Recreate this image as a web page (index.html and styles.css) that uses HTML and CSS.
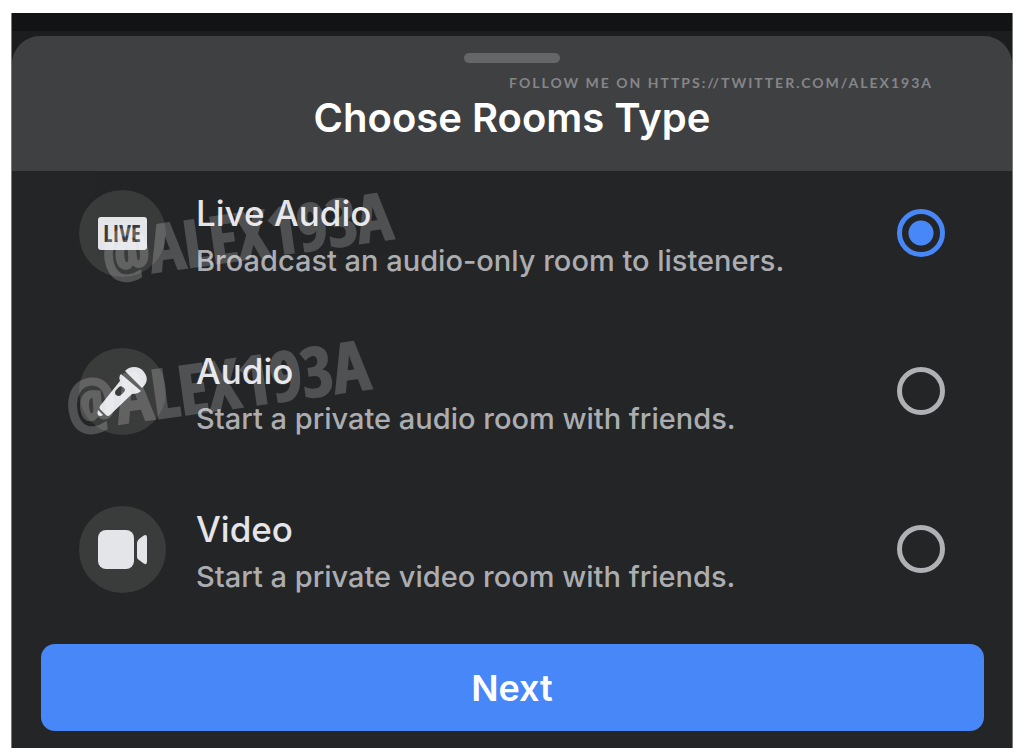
FILE: index.html
```html
<!doctype html>
<html lang="en">
<head>
	<meta charset="UTF-8">
	<title>Choose Rooms Type</title>
	<meta name="viewport" content="width=device-width, initial-scale=1">
	<link rel="stylesheet" href="styles.css">
</head>
<body>
	<main class="screen">
		<form class="sheet">
			<header class="header">
				<div class="handle"></div>
				<p class="credit">FOLLOW ME ON HTTPS://TWITTER.COM/ALEX193A</p>
				<h1>Choose Rooms Type</h1>
			</header>
			<div class="options">
				<label class="option">
					<span class="icon">
						<svg viewBox="0 0 87 87" aria-hidden="true">
							<rect x="19" y="27" width="49" height="33" rx="3"/>
							<text class="live" x="43" y="52" text-anchor="middle">LIVE</text>
						</svg>
					</span>
					<span class="text">
						<span class="name">Live Audio</span>
						<span class="info">Broadcast an audio-only room to listeners.</span>
					</span>
					<input type="radio" name="room" value="live" checked>
					<span class="watermark">@ALEX193A</span>
				</label>
				<label class="option">
					<span class="icon">
						<svg viewBox="0 0 87 87" aria-hidden="true">
							<path d="M46 23C51 17 61 18 65 24C69 29 69 35 63 40Z"/>
							<path fill-rule="evenodd" d="M42 26L62 43C60 45 57 46 53 46L31 67Q29 69 27 67L21 61Q20 60 21 58L41 33C40 30 40 28 42 26ZM45 40Q42 37 40 39L37 42Q35 45 37 47Q40 49 42 47L45 44Q47 42 45 40Z"/>
							<path d="M19 62L24 67Q21 69 19 67Q18 65 19 62Z"/>
						</svg>
					</span>
					<span class="text">
						<span class="name">Audio</span>
						<span class="info">Start a private audio room with friends.</span>
					</span>
					<input type="radio" name="room" value="audio">
					<span class="watermark watermark-left">@ALEX193A</span>
				</label>
				<label class="option">
					<span class="icon">
						<svg viewBox="0 0 87 87" aria-hidden="true">
							<rect x="19" y="24" width="36" height="39" rx="8"/>
							<path d="M58 37Q58 35 60 33L64 30Q68 27 68 32V55Q68 60 64 57L60 54Q58 53 58 51Z"/>
						</svg>
					</span>
					<span class="text">
						<span class="name">Video</span>
						<span class="info">Start a private video room with friends.</span>
					</span>
					<input type="radio" name="room" value="video">
				</label>
			</div>
			<button class="next" type="button">Next</button>
		</form>
	</main>
</body>
</html>
```
FILE: styles.css
```css
body {
	margin: 0;
	padding: 13px 12px 7px;
	background: #fff;
	font-family: Inter, "Liberation Sans", sans-serif;
}
.screen {
	border-top: 18px solid #121315;
	padding-top: 5px;
	background: #1c1d1f;
	box-shadow: 0 0 0 1px #77787a;
	clip-path: inset(0 -1px);
}
.sheet {
	overflow: hidden;
	padding-bottom: 17px;
	border-radius: 28px 28px 0 0;
	background: #242527;
}
.header {
	display: flex;
	flex-direction: column;
	padding: 17px 79px 30px;
	background: #3f4042;
	text-align: center;
}
.handle {
	align-self: center;
	width: 96px;
	height: 10px;
	border-radius: 5px;
	background: #656668;
}
.credit {
	align-self: flex-end;
	margin: 10px 0 2px;
	color: #858688;
	font: bold 14px/20px Lato, sans-serif;
	letter-spacing: 2px;
}
h1 {
	margin: 0;
	color: #fff;
	font-size: 40px;
	font-weight: 600;
	line-height: 46px;
}
.options {
	display: grid;
	gap: 60px;
	padding: 13px 67px 46px;
}
.option {
	position: relative;
	display: flex;
	align-items: center;
	gap: 30px;
}
.icon {
	flex: none;
	width: 87px;
	height: 87px;
	border-radius: 50%;
	background: #3a3b3b;
}
.icon svg {
	display: block;
	fill: #e4e5e9;
}
.icon .live {
	fill: #3a3b3b;
	font: bold 23px "Liberation Sans Narrow", "Open Sans Condensed", sans-serif;
}
.text {
	flex: 1;
	display: grid;
	gap: 4px;
	padding-top: 7px;
}
.name {
	color: #e4e5e9;
	font-size: 35px;
	font-weight: 500;
	line-height: 44px;
}
.info {
	color: #acadb1;
	font-size: 29px;
	font-weight: 500;
	line-height: 43px;
}
input {
	appearance: none;
	flex: none;
	width: 48px;
	height: 48px;
	margin: 0;
	border: 5px solid #b0b1b5;
	border-radius: 50%;
}
input:checked {
	border-color: #4887f7;
	background: radial-gradient(circle, #4887f7 12px, transparent 13px);
}
/* stamped over the icon and the text of a row */
.watermark {
	position: absolute;
	top: 14px;
	left: 22px;
	color: #fff;
	font: bold 65px/72px "Liberation Sans Narrow", "Open Sans Condensed", sans-serif;
	-webkit-text-stroke: 2px #fff;
	opacity: .2;
	transform: rotate(-8deg);
	pointer-events: none;
}
.watermark-left {
	top: 6px;
	left: -14px;
	font-size: 68px;
}
.next {
	display: block;
	width: calc(100% - 57px);
	height: 87px;
	margin: 0 auto;
	border: 0;
	border-radius: 14px;
	background: #4887f7;
	color: #fff;
	font: 600 36px Inter, "Liberation Sans", sans-serif;
}
```
